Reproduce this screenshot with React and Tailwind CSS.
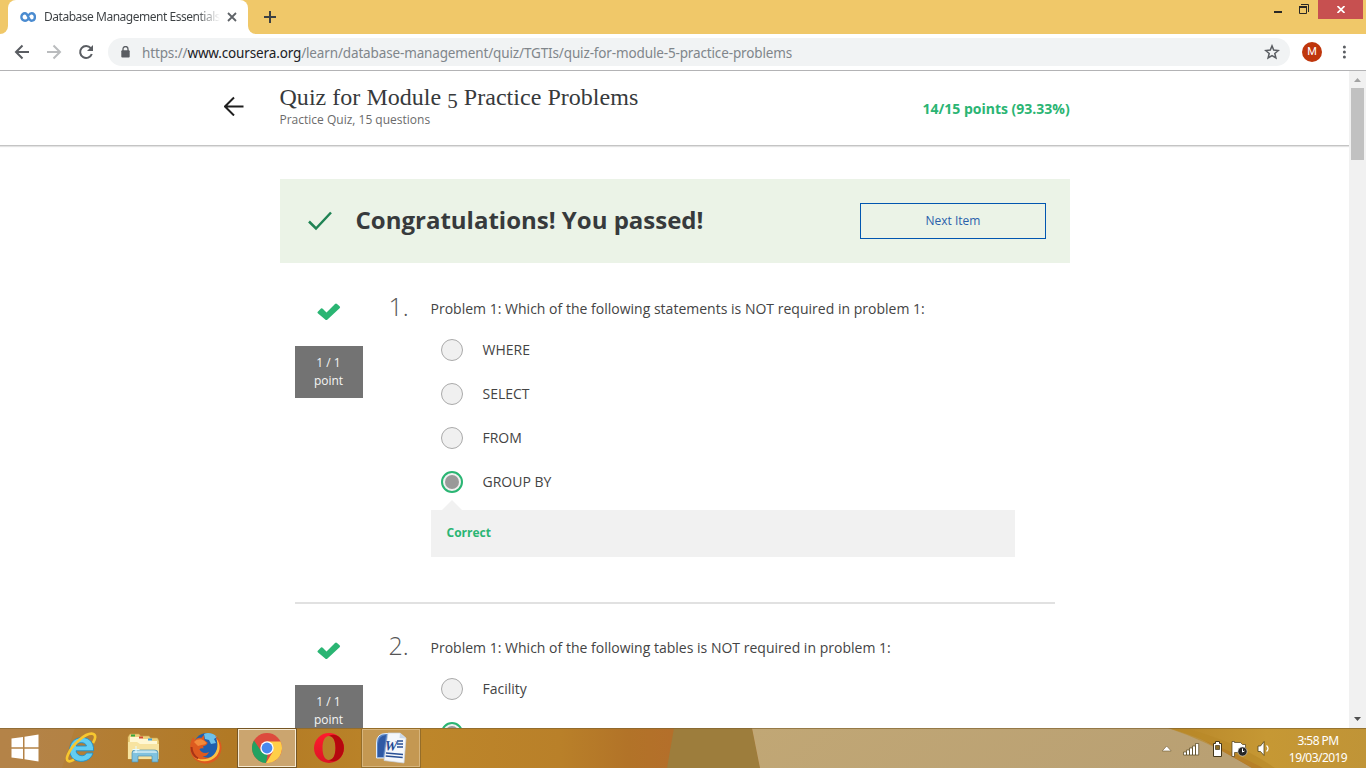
import React from "react";

function TitleBar() {
  return (
    <div className="flex h-[34px] w-full shrink-0 bg-[#f0c869]">
      <div className="flex h-full w-2 shrink-0 items-end bg-white">
        <div className="h-full w-full rounded-br-lg bg-[#f0c869]" />
      </div>
      <div className="flex h-full w-60 shrink-0 items-center rounded-t-lg bg-white pl-3">
        <svg width="16" height="10" viewBox="0 0 16 10" className="shrink-0">
          <path d="M8.700 6.200C7.800 8 6.600 8.700 5 8.700 2.900 8.700 1.400 7.100 1.400 5S2.900 1.300 5 1.300c3.400 0 3.200 7.400 6.600 7.400 2 0 3.300-1.600 3.300-3.700S13.600 1.300 11.600 1.300c-1.400 0-2.300.8-2.900 2" fill="none" stroke="#4a8bd0" strokeWidth="2.400" />
        </svg>
        <div className="ml-2 w-[176px] overflow-hidden whitespace-nowrap bg-gradient-to-r from-[#3c4043] from-87% to-transparent bg-clip-text font-['Noto_Sans',sans-serif] text-[12px] leading-4 tracking-[-0.48px] text-transparent">
          Database Management Essentials
        </div>
        <svg width="10" height="10" viewBox="0 0 10 10" className="ml-[7px] shrink-0">
          <path d="M1 1l8 8M9 1L1 9" stroke="#5f6368" strokeWidth="1.8" />
        </svg>
      </div>
      <div className="h-full w-2 shrink-0 bg-white">
        <div className="h-full w-full rounded-bl-lg bg-[#f0c869]" />
      </div>
      <svg width="12" height="12" viewBox="0 0 12 12" className="ml-2 mt-[11px] shrink-0">
        <path d="M6 0v12M0 6h12" stroke="#3c4043" strokeWidth="2" />
      </svg>
      <div className="flex-1" />
      <svg width="8" height="2" className="mt-[11px] shrink-0"><path d="M0 0h8v2H0z" fill="#2a2825" /></svg>
      <svg width="10" height="10" viewBox="0 0 10 10" className="ml-[17px] mt-1 shrink-0">
        <path d="M2 .5h7.500v7.500M.5 3.500h7v6h-7z" fill="none" stroke="#2a2825" />
        <path d="M0 2h8v2H0z" fill="#2a2825" />
      </svg>
      <div className="ml-[9px] mr-[3px] flex h-[19px] w-[45px] shrink-0 items-center justify-center bg-[#c75050]">
        <svg width="8" height="7" viewBox="0 0 8 7"><path d="M.5 0l7 7M7.500 0l-7 7" stroke="#fff" strokeWidth="1.7" /></svg>
      </div>
    </div>
  );
}

function Toolbar() {
  return (
    <div className="flex h-[37px] w-full shrink-0 items-center border-b border-[#b3b3b5] bg-white">
      <svg width="108" height="36" viewBox="0 0 108 36" className="shrink-0" fill="none">
        <g strokeWidth="2">
          <path d="M29 18H16.500M22.500 11.500L16 18l6.500 6.500" stroke="#5a5d62" />
          <path d="M47 18h12.500M53.500 11.500L60 18l-6.500 6.500" stroke="#babcbe" />
          <path d="M90.800 14.200A6 6 0 1 0 91.800 20" stroke="#5a5d62" />
        </g>
        <path d="M93 11v6h-6z" fill="#5a5d62" />
      </svg>
      <div className="flex h-7 w-[1182px] shrink-0 items-center rounded-full bg-[#f1f3f4]">
        <svg width="9" height="12" viewBox="0 0 9 12" className="ml-[13px] shrink-0">
          <path d="M2 5V3a2.500 2.500 0 0 1 5 0v2" fill="none" stroke="#5a5d62" strokeWidth="1.300" />
          <rect x=".3" y="4.300" width="8.400" height="7.200" rx="1" fill="#5a5d62" />
        </svg>
        <div className="ml-3 whitespace-nowrap pt-px font-['Noto_Sans',sans-serif] text-[13.5px] leading-5 tracking-[-0.14px] text-[#80868b]">
          https://<span className="text-[#202124]">www.coursera.org</span>/learn/database-management/quiz/TGTIs/quiz-for-module-5-practice-problems
        </div>
        <div className="flex-1" />
        <svg width="16" height="16" viewBox="0 0 16 16" className="mr-[10px] shrink-0">
          <path d="M8 1.900l1.700 4.200 4.600.4-3.500 3 1.100 4.500L8 11.600 4.100 14l1.100-4.500-3.500-3 4.600-.4z" fill="none" stroke="#5a5d62" strokeWidth="1.500" />
        </svg>
      </div>
      <div className="ml-3 flex h-5 w-5 shrink-0 items-center justify-center rounded-full bg-[#bf360c] font-[Roboto,sans-serif] text-[11px] text-white">M</div>
      <svg width="4" height="14" viewBox="0 0 4 14" className="ml-5 shrink-0" fill="#5a5d62">
        <circle cx="2.400" cy="2" r="1.500" /><circle cx="2.400" cy="7" r="1.500" /><circle cx="2.400" cy="12" r="1.500" />
      </svg>
    </div>
  );
}

function QuizHeader() {
  return (
    <div className="flex h-[75px] w-full shrink-0 border-b border-[#c4c4c4] bg-white shadow-[0_1px_1px_#e3e3e3]">
      <svg width="20" height="20" viewBox="0 0 20 20" className="ml-[224px] mt-[25px] shrink-0">
        <path d="M19.500 10.500H1.500M10 1.500l-9 9 9 9" fill="none" stroke="#1f1f1f" strokeWidth="2" />
      </svg>
      <div className="ml-[35.500px] w-[643px] shrink-0 pt-3">
        <div className="h-7 whitespace-nowrap font-['Liberation_Serif',serif] text-[24px] leading-7 tracking-[0.03px] text-[#373a3c]">
          Quiz for Module <span className="relative top-[3px] text-[21px]">5</span> Practice Problems
        </div>
        <div className="mt-px font-['Open_Sans',sans-serif] text-[12px] leading-4 text-[#6b6b6b]">Practice Quiz, 15 questions</div>
      </div>
      <div className="mt-7 whitespace-nowrap font-['Open_Sans',sans-serif] text-[14px] font-bold leading-5 text-[#2ab573]">14/15 points (93.33%)</div>
    </div>
  );
}

function Option({ label, selected }) {
  return (
    <div className="flex h-11 items-center pl-[10px]">
      {selected ? (
        <div className="flex h-[22px] w-[22px] shrink-0 items-center justify-center rounded-full border-2 border-[#2ab573] bg-[#f1f1f1]">
          <div className="h-[14px] w-[14px] rounded-full bg-[#999999]" />
        </div>
      ) : (
        <div className="h-[22px] w-[22px] shrink-0 rounded-full border border-[#aaaaaa] bg-[#f0f0f0]" />
      )}
      <div className="ml-[19.500px] whitespace-nowrap text-[14px] leading-5 text-[#444444]">{label}</div>
    </div>
  );
}

function Question({ number, text, options, selected, feedback }) {
  return (
    <div className="flex w-[760px] shrink-0 font-['Open_Sans',sans-serif]">
      <div className="flex w-[68px] shrink-0 flex-col items-center pt-2">
        <svg width="24" height="18" viewBox="0 0 24 18">
          <path d="M.8 8.700L4 5.500Q5 5 6 6l3.500 3.500L18 1q1-1 2 0l2.600 2.300q1 1 0 2L10.500 16.500q-1.200 1-2.300 0L.8 10.300Q0 9.500.8 8.700z" fill="#2ab573" />
        </svg>
        <div className="mt-[25px] h-[52px] w-full bg-[#737373] pt-2 text-center text-[12px] leading-[18px] text-[#f5f5f5]"><div className="-ml-px">1 / 1<br />point</div></div>
      </div>
      <div className="-mt-[3px] ml-[25.500px] w-[42px] shrink-0 text-[25px] font-light leading-7 text-[#555555]">{number}.</div>
      <div className="w-[584px] shrink-0">
        <div className="mb-[10px] whitespace-nowrap pt-1 text-[14px] leading-[19px] tracking-[0.01px] text-[#444444]">{text}</div>
        <div className="pl-[0.5px]">
          {options.map((o, i) => <Option key={o} label={o} selected={i === selected} />)}
        </div>
        {feedback && (
          <div className="-mt-1 ml-[0.5px]">
            <svg width="20" height="10" viewBox="0 0 20 10" className="ml-[11px] block"><path d="M0 10L10 0l10 10z" fill="#f1f1f1" /></svg>
            <div className="h-[47px] w-[584px] bg-[#f1f1f1] pl-[15.500px] text-[12px] font-bold leading-[46px] text-[#2ab573]">{feedback}</div>
          </div>
        )}
      </div>
    </div>
  );
}

function Page() {
  return (
    <div className="flex h-[657px] w-full overflow-hidden bg-white">
      <div className="flex w-[1349px] shrink-0 flex-col">
        <QuizHeader />
        <div className="mt-[33px] ml-[280px] flex h-[84px] w-[790px] shrink-0 items-center bg-[#ebf3e7]">
          <svg width="24" height="20" viewBox="0 0 24 20" className="ml-7 shrink-0">
            <path d="M1 10.500l7 7L23 1.500" fill="none" stroke="#1f8354" strokeWidth="2.500" />
          </svg>
          <div className="ml-[23.500px] w-[504.500px] shrink-0 whitespace-nowrap pb-0.5 font-['Open_Sans',sans-serif] text-[24px] font-bold leading-8 text-[#373a3c]">Congratulations! You passed!</div>
          <div className="flex h-9 w-[186px] shrink-0 items-center justify-center border border-[#0156b0] font-['Open_Sans',sans-serif] text-[12px] text-[#2a5fab]">Next Item</div>
        </div>
        <div className="ml-[295px] mt-8 flex w-[760px] flex-col">
          <Question number={1} text="Problem 1: Which of the following statements is NOT required in problem 1:" options={["WHERE", "SELECT", "FROM", "GROUP BY"]} selected={3} feedback="Correct" />
          <div className="mb-[30px] mt-[45px] h-[2px] w-full bg-[#e1e1e1]" />
          <Question number={2} text="Problem 1: Which of the following tables is NOT required in problem 1:" options={["Facility", ""]} selected={1} />
        </div>
      </div>
      <div className="flex w-[17px] shrink-0 flex-col items-center bg-[#f1f1f1]">
        <svg width="7" height="4" className="mt-[7px] shrink-0"><path d="M0 4L3.500 0 7 4z" fill="#a3a3a3" /></svg>
        <div className="mt-[6px] h-[72px] w-[13px] shrink-0 bg-[#c1c1c1]" />
        <div className="flex-1" />
        <svg width="7" height="4" className="mb-[7px] shrink-0"><path d="M0 0h7L3.500 4z" fill="#505050" /></svg>
      </div>
    </div>
  );
}

function WindowsLogo() {
  return (
    <svg width="28" height="28" viewBox="0 0 28 28" fill="#fff">
      <path d="M.5 4.600L12 3v10.300H.5zM13.500 2.700L27.500.5v12.800h-14zM.5 14.700H12V25L.5 23.400zM13.500 14.700h14v12.800l-14-2.200z" />
    </svg>
  );
}

function ExplorerE() {
  return (
    <svg width="32" height="32" viewBox="0 0 32 32">
      <path d="M28.500 18.800H11c.8 5.700 8.700 6.500 10.500 2.200h6.500C26 28.500 17 31.500 9.800 27.800 1.800 23 3.400 9 13 6.200c9.500-2.700 16.300 3.300 15.500 12.600zM11 14h10.500C20.700 9.500 12 9.500 11 14z" fill="#62cdf2" stroke="#1d8fcb" strokeWidth=".9" />
      <path d="M28 11C30.500 7 31.500 2.500 27.500 1.700 21 .5 7.500 12 3 22.500c-3 7 1 8.300 6 5.200" fill="none" stroke="#f7c72f" strokeWidth="2.600" />
    </svg>
  );
}

function Folder() {
  return (
    <svg width="32" height="32" viewBox="0 0 32 32">
      <path d="M1 5l2-3h9l1.500 2H22l1.500 2h7L32 9v18H1z" fill="#eed17c" stroke="#c7a14b" strokeWidth=".6" />
      <path d="M3 5h12l1 2h8l1 2h5v5H3z" fill="#fff7d2" />
      <path d="M4 2.500h4v2H4z" fill="#36a83f" /><path d="M12 4.500h4v2h-4z" fill="#d44a32" /><path d="M21 6.500h4v2h-4z" fill="#3b9edb" />
      <path d="M1 10h9l3 2h19v15H1z" fill="#f7e3a0" />
      <path d="M5 30V21q0-3 3-3h20q3 0 3 3v9h-6v-6H11v6z" fill="#80c2df" stroke="#508fad" strokeWidth=".7" />
      <path d="M6 21q0-2.500 3-2.500h18q3 0 3 2.500H6z" fill="#c0e3ef" />
      <path d="M9 14v7M5.500 17.500h7" stroke="#e7fbff" />
    </svg>
  );
}

function Firefox() {
  return (
    <svg width="32" height="32" viewBox="0 0 32 32">
      <circle cx="17" cy="14.500" r="13.500" fill="#1f5fae" />
      <path d="M14 2c4-2 10-.5 13 3l-3 2 2 4-5 1-2-4-4-1z" fill="#6cc0ea" />
      <path d="M25 3.500c5 3.500 7.500 9 6.200 15C29.500 26.500 23.500 31.500 16 31.500 7 31.500 0 25 0 16 0 11 1.500 7.500 3.500 5l1.200 3C7 6 9 5.500 11.500 5.700L14 3l.5 5.200 3.200 2.500c-.5 2-2.200 3-4.500 3.300l.3 2.500c-1.500-.5-3-.4-4 .8 1.500 3.500 5.500 4.700 9.500 2.700-1 3-3.500 4.500-6.500 4.300 5.500 3 12 .7 14-4.800C28.500 14 28 8 25 3.500z" fill="#dd5a1f" />
      <path d="M26 6c4.500 5 5 12.500.5 18-6 7-17.500 7-23 .500C9 28.500 18 28.500 23.500 23 28 18.500 28.500 12 26 6z" fill="#fcc044" />
      <path d="M4 10c2.500-2.500 5-3 8-2.500l2.500 1.500 2 2c-1 1.500-3 1.500-5 2L8 14z" fill="#f28a3b" />
      <path d="M1.500 15c0 5 2.500 9 6.500 11.500" fill="none" stroke="#a83416" strokeWidth="2" />
    </svg>
  );
}

function ChromeLogo() {
  return (
    <svg width="30" height="30" viewBox="0 0 30 30">
      <circle cx="15" cy="15" r="15" fill="#dd4b3d" />
      <path d="M2 7.500l7.200 10.700 6.300 3.800L14 30A15 15 0 0 1 2 7.500z" fill="#21a261" />
      <path d="M15 8.500h13.500A15 15 0 0 1 14 30l7-11.500z" fill="#ffcf48" />
      <circle cx="15" cy="15" r="6.700" fill="#fff" /><circle cx="15" cy="15" r="5.400" fill="#4788ee" />
    </svg>
  );
}

function Opera() {
  return (
    <svg width="30" height="30" viewBox="0 0 30 30">
      <defs><linearGradient id="operaRed" x2="0" y2="1"><stop offset="0" stopColor="#ff1b2d" /><stop offset="1" stopColor="#dc1525" /></linearGradient></defs>
      <path fillRule="evenodd" d="M15 0a15 15 0 1 0 0 30 15 15 0 0 0 0-30zm0 3c4.500 0 6.500 5.500 6.500 12S19.500 27 15 27 8.500 21.500 8.500 15 10.500 3 15 3z" fill="url(#operaRed)" />
      <path d="M15 3c3-2 7-1.500 10 .8A15 15 0 0 1 25 26c-3.500 2.500-7 3-10 1 4.500 0 6.500-5.500 6.500-12S19.500 3 15 3z" fill="#b6080e" />
    </svg>
  );
}

function Word() {
  return (
    <svg width="32" height="32" viewBox="0 0 32 32">
      <path d="M1.500 26V11q0-9.500 9.500-9.500h10L19 26z" fill="#5683c5" stroke="#e0ecfa" />
      <path d="M3 25V12q0-8 8-9L8 25z" fill="#2f59a4" />
      <path d="M13 1h12l6 5-2 25-20-2.500z" fill="#f4f7fb" stroke="#c8d2df" strokeWidth=".7" />
      <path d="M25 1l-.5 5 6.500.5z" fill="#cad8e8" />
      <path d="M22 9h6M22 12h6M22 15h6M11 21l17 1.500M10.700 24l17 1.500" stroke="#294f94" strokeWidth="1.700" />
      <text x="9.500" y="18" transform="rotate(4 10 18)" className="font-['Liberation_Serif',serif] text-[14px] font-bold italic" fill="#244b93">W</text>
    </svg>
  );
}

function TrayIcons() {
  return (
    <svg width="110" height="20" viewBox="0 0 110 20" className="shrink-0">
      <path d="M.2 13L4.700 8l4.500 5z" fill="#fff" stroke="#705b34" strokeWidth=".6" />
      <g fill="#fff" stroke="#55451f" strokeWidth=".7">
        <path d="M21.500 14h3v3h-3zM24.500 12h3v5h-3zM27.500 10h3v7h-3zM30.500 8h3v9h-3zM33.500 5.500h3.200V17h-3.200z" />
      </g>
      <path d="M51.500 5.500h2v-2h4v2h2v13h-8z" fill="#fff" stroke="#443719" />
      <path d="M53.500 7.500h4v4h-4z" fill="#8c6c25" stroke="#443719" strokeWidth=".7" />
      <path d="M70 3.500h2.500v1h6l2 2h3v8H72.500v4H70z" fill="#fff" stroke="#4a3c1d" strokeWidth=".7" />
      <circle cx="80.500" cy="13.500" r="4.600" fill="#262626" stroke="#ddd" strokeWidth=".6" />
      <path d="M80.500 10.500V14l2-1" fill="none" stroke="#fff" />
      <path d="M96 8h2.500L102 3.500v14L98.500 13.500H96z" fill="#fff" stroke="#514218" strokeWidth=".8" />
      <path d="M104.500 7.500q3 3 0 6" fill="none" stroke="#fff" strokeWidth="1.300" />
    </svg>
  );
}

function Taskbar() {
  return (
    <div className="grid h-10 w-full shrink-0 grid-cols-1 grid-rows-1">
      <svg width="1366" height="40" viewBox="0 0 1366 40" className="col-start-1 row-start-1">
        <defs>
          <linearGradient id="wood"><stop offset="0" stopColor="#b48141" /><stop offset=".17" stopColor="#b17924" /><stop offset=".31" stopColor="#bd862a" /><stop offset=".41" stopColor="#b98029" /><stop offset=".46" stopColor="#b27328" /><stop offset=".49" stopColor="#b46f2a" /></linearGradient>
          <linearGradient id="sand" x2="1" y2=".1"><stop offset="0" stopColor="#c1a775" /><stop offset="1" stopColor="#b9a073" /></linearGradient>
          <linearGradient id="gold" x2="1"><stop offset="0" stopColor="#b78629" /><stop offset=".5" stopColor="#c69834" /><stop offset="1" stopColor="#c09437" /></linearGradient>
        </defs>
        <path d="M0 0h1366v40H0z" fill="url(#wood)" />
        <path d="M0 0h75L62 40H0z" fill="#b38650" opacity=".5" />
        <path d="M674 0h78l8 40h-93z" fill="#9d7d3c" />
        <path d="M752 0h430l70 40H760z" fill="url(#sand)" />
        <path d="M1168 0h198v40h-103Q1210 12 1168 0z" fill="url(#gold)" />
        <path d="M1168 0h15q51 12 92 40h-23Q1210 14 1168 0z" fill="#b98828" opacity=".65" />
        <path d="M0 .5h1366" stroke="#80632f" strokeOpacity=".65" />
      </svg>
      <div className="z-10 col-start-1 row-start-1 flex h-10 items-center">
        <div className="flex w-[50px] shrink-0 justify-center"><WindowsLogo /></div>
        <div className="flex w-[62px] shrink-0 justify-center"><ExplorerE /></div>
        <div className="flex w-[62px] shrink-0 justify-center"><Folder /></div>
        <div className="flex w-[63px] shrink-0 justify-center"><Firefox /></div>
        <div className="flex h-10 w-[60px] shrink-0 items-center justify-center border border-[#765624] bg-[#cba56f] shadow-[inset_0_0_0_1px_#f7ead2]"><ChromeLogo /></div>
        <div className="flex w-[64px] shrink-0 justify-center"><Opera /></div>
        <div className="flex h-10 w-[60px] shrink-0 items-center justify-center border border-[#956d29] bg-[#c49852] shadow-[inset_0_0_0_1px_#d7b57d]"><Word /></div>
        <div className="flex-1" />
        <TrayIcons />
        <div className="ml-2 mr-[10px] w-[76px] shrink-0 pt-px text-center font-['Noto_Sans',sans-serif] text-[12px] leading-[17px] tracking-[-0.55px] text-white"><div>3:58 PM</div><div>19/03/2019</div></div>
      </div>
    </div>
  );
}

export default function App() {
  return (
    <div className="flex h-[768px] w-[1366px] flex-col overflow-hidden bg-white">
      <TitleBar />
      <Toolbar />
      <Page />
      <Taskbar />
    </div>
  );
}
